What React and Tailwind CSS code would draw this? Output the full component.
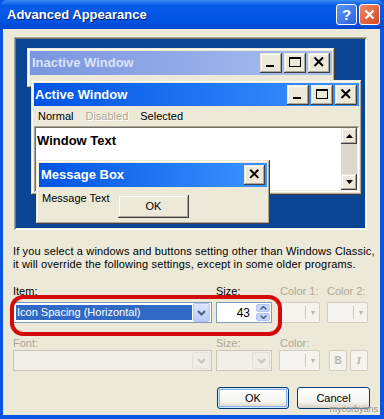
import React from 'react';

// raised classic 3D edge used for the preview windows and their buttons
const raised = 'shadow-[inset_-1px_-1px_#404040,inset_1px_1px_#ece9d8,inset_-2px_-2px_#aca899,inset_2px_2px_#fff]';
const sunken = 'shadow-[inset_1px_1px_#aca899,inset_-1px_-1px_#fff,inset_2px_2px_#716f64,inset_-2px_-2px_#f1efe2]';

const CapButton = ({ type, w = 'w-[22px]', h = 'h-[20px]' }) => (
    <div className={`${w} ${h} bg-[#ece9d8] ${raised} flex items-center justify-center`}>
        <svg width="22" height="20" viewBox="0 0 22 20">
            {type === 'min' && <rect x="6" y="12" width="8" height="2" fill="#000" />}
            {type === 'max' && (
                <g fill="none" stroke="#000">
                    <rect x="5.5" y="4.5" width="11" height="9" />
                    <line x1="5" y1="5.5" x2="17" y2="5.5" />
                </g>
            )}
            {type === 'close' && (
                <path d="M6.5 4.5 L15 13 M15 4.5 L6.5 13" stroke="#000" strokeWidth="2" />
            )}
        </svg>
    </div>
);

const ScrollArrow = ({ up }) => (
    <div className={`h-[16px] w-[16px] bg-[#ece9d8] ${raised} flex items-center justify-center`}>
        <svg width="7" height="4" viewBox="0 0 7 4">
            <path d={up ? 'M0 4 L3.5 0 L7 4 Z' : 'M0 0 L3.5 4 L7 0 Z'} fill="#000" />
        </svg>
    </div>
);

const Chevron = ({ color }) => (
    <svg width="9" height="6" viewBox="0 0 9 6">
        <path d="M1 1 L4.5 4.5 L8 1" fill="none" stroke={color} strokeWidth="2" />
    </svg>
);

const DisabledBox = ({ className, children }) => (
    <div className={`${className} h-[21px] border border-[#d2cfc0] bg-[#f4f3ee] rounded-[2px] flex items-center`}>
        {children}
    </div>
);

const ColorButton = () => (
    <DisabledBox className="w-[41px] justify-end">
        <div className="h-[13px] w-px bg-[#c9c7ba] mr-[5px]" />
        <span className="text-[8px] text-[#b8b5a6] mr-[4px] leading-none">▾</span>
    </DisabledBox>
);

const DisabledCombo = ({ width }) => (
    <div className={`${width} h-[21px] border border-[#c9c7ba] bg-[#f0efe8] flex justify-end p-px`}>
        <div className="w-[18px] h-full rounded-[2px] bg-[#eeede6] border border-[#e3e1d6] flex items-center justify-center">
            <Chevron color="#c9c7ba" />
        </div>
    </div>
);

const XpButton = ({ label, isDefault }) => (
    <button
        className={`h-[22px] rounded-[3px] border border-[#003c74] bg-[linear-gradient(to_bottom,#fff,#f4f3ee_70%,#d6d0c5)] text-[11px] text-black ${isDefault ? 'w-[72px] shadow-[inset_0_0_0_1px_#cee7ff,inset_0_0_0_2px_#8cb0f0]' : 'w-[73px]'}`}
    >
        {label}
    </button>
);

const App = () => {
    return (
        <div className="w-[384px] h-[419px] bg-[#0a54e4] flex flex-col font-['Liberation_Sans',Arial,sans-serif] select-none">
            {/* Title bar */}
            <div className="h-[29px] shrink-0 flex items-center pl-[7px] pr-[4px] bg-[linear-gradient(to_bottom,#3d8cf5,#0a5ae8_18%,#0055e5_70%,#0046d2)] rounded-t-[7px]">
                <span className="flex-1 text-white font-bold text-[13px] [text-shadow:1px_1px_#0a1e6e]">Advanced Appearance</span>
                <div className="flex gap-[2px]">
                    <div className="w-[21px] h-[21px] rounded-[3px] border border-white bg-[linear-gradient(135deg,#5c95f5,#2a63e0)] flex items-center justify-center text-white font-bold text-[15px] leading-none">?</div>
                    <div className="w-[21px] h-[21px] rounded-[3px] border border-white bg-[linear-gradient(135deg,#f08a66,#d4461f)] flex items-center justify-center">
                        <svg width="11" height="11" viewBox="0 0 11 11">
                            <path d="M1.5 1.5 L9.5 9.5 M9.5 1.5 L1.5 9.5" stroke="#fff" strokeWidth="2.2" />
                        </svg>
                    </div>
                </div>
            </div>

            {/* Body */}
            <div className="relative flex-1 ml-[3px] mr-[4px] mb-[4px] bg-[#ece9d8] pl-[10px] pt-[8px] text-[11px] text-black">
                {/* Preview */}
                <div className={`ml-px w-[353px] h-[193px] p-[2px] ${sunken} bg-[#ece9d8]`}>
                    <div className="relative w-full h-full bg-[#0a4593] overflow-hidden">
                        {/* Inactive window */}
                        <div className={`absolute left-[11px] top-[9px] w-[308px] h-[40px] p-[3px] bg-[#ece9d8] ${raised}`}>
                            <div className="h-[24px] flex items-center pl-[2px] pr-[2px] bg-[linear-gradient(to_right,#7a96df,#a9c0ee)]">
                                <span className="flex-1 font-bold text-[13px] text-[#d8e4f8]">Inactive Window</span>
                                <div className="flex gap-[2px]">
                                    <CapButton type="min" />
                                    <CapButton type="max" />
                                    <CapButton type="close" />
                                </div>
                            </div>
                        </div>

                        {/* Active window */}
                        <div className={`absolute left-[15px] top-[41px] w-[331px] h-[115px] p-[3px] bg-[#ece9d8] flex flex-col ${raised}`}>
                            <div className="h-[23px] shrink-0 flex items-center pl-[1px] pr-[2px] bg-[linear-gradient(to_right,#0054e3,#3d95ff)]">
                                <span className="flex-1 font-bold text-[13px] text-white">Active Window</span>
                                <div className="flex gap-[2px]">
                                    <CapButton type="min" />
                                    <CapButton type="max" />
                                    <CapButton type="close" />
                                </div>
                            </div>
                            <div className="h-[20px] shrink-0 flex items-center pl-[4px] gap-[12px]">
                                <span>Normal</span>
                                <span className="text-[#aca899] [text-shadow:1px_1px_#fff]">Disabled</span>
                                <span>Selected</span>
                            </div>
                            <div className={`flex-1 flex p-[2px] bg-white ${sunken}`}>
                                <div className="flex-1 pl-[1px] pt-[3px] font-bold text-[13px]">Window Text</div>
                                <div className="w-[16px] flex flex-col bg-[#f1efe2]">
                                    <ScrollArrow up />
                                    <div className="flex-1 bg-[#dcd9cc]" />
                                    <ScrollArrow />
                                </div>
                            </div>
                        </div>

                        {/* Message box */}
                        <div className={`absolute left-[20px] top-[121px] w-[234px] h-[64px] p-[3px] bg-[#ece9d8] flex flex-col ${raised}`}>
                            <div className="h-[24px] shrink-0 flex items-center pl-[2px] pr-[2px] bg-[linear-gradient(to_right,#0054e3,#3d95ff)]">
                                <span className="flex-1 font-bold text-[13px] text-white">Message Box</span>
                                <CapButton type="close" w="w-[21px]" />
                            </div>
                            <div className="flex-1 flex items-start pl-[3px]">
                                <span className="mt-[3px] w-[76px]">Message Text</span>
                                <div className={`mt-[8px] w-[71px] h-[23px] flex items-center justify-center bg-[#ece9d8] ${raised}`}>OK</div>
                            </div>
                        </div>
                    </div>
                </div>

                {/* Description */}
                <p className="mt-[15px] leading-[13px] tracking-[0.15px]">
                    If you select a windows and buttons setting other than Windows Classic,<br />
                    it will override the following settings, except in some older programs.
                </p>

                {/* Item row */}
                <div className="mt-[14px] flex">
                    <div className="w-[199px] flex flex-col">
                        <span className="leading-[13px]">Item:</span>
                        <div className="mt-[4px] h-[21px] border border-[#7f9db9] bg-white flex items-center p-[2px] gap-px">
                            <div className="flex-1 h-full bg-[#316ac5] text-white flex items-center pl-[1px]">Icon Spacing (Horizontal)</div>
                            <div className="w-[17px] h-[19px] -mr-px rounded-[2px] bg-[linear-gradient(to_bottom,#dde7fd,#b6cbf9)] border border-[#b1c8f7] flex items-center justify-center">
                                <Chevron color="#4d6185" />
                            </div>
                        </div>
                    </div>
                    <div className="ml-[4px] w-[56px] flex flex-col">
                        <span className="leading-[13px]">Size:</span>
                        <div className="mt-[4px] h-[21px] border border-[#7f9db9] bg-white flex items-center pl-[2px]">
                            <span className="flex-1 text-right pr-[5px] text-[12px]">43</span>
                            <div className="w-[16px] h-full flex flex-col p-px gap-px">
                                <div className="flex-1 rounded-[2px] bg-[#c6d5f9] border border-[#b2c6f5] flex items-center justify-center">
                                    <svg width="7" height="4" viewBox="0 0 7 4"><path d="M0.5 3.5 L3.5 0.5 L6.5 3.5" fill="none" stroke="#4d6185" strokeWidth="1.5" /></svg>
                                </div>
                                <div className="flex-1 rounded-[2px] bg-[#c6d5f9] border border-[#b2c6f5] flex items-center justify-center">
                                    <svg width="7" height="4" viewBox="0 0 7 4"><path d="M0.5 0.5 L3.5 3.5 L6.5 0.5" fill="none" stroke="#4d6185" strokeWidth="1.5" /></svg>
                                </div>
                            </div>
                        </div>
                    </div>
                    <div className="ml-[7px] w-[41px] flex flex-col">
                        <span className="leading-[13px] pl-px text-[#aca899]">Color 1:</span>
                        <div className="mt-[4px]"><ColorButton /></div>
                    </div>
                    <div className="ml-[7px] w-[41px] flex flex-col">
                        <span className="leading-[13px] text-[#aca899]">Color 2:</span>
                        <div className="mt-[4px]"><ColorButton /></div>
                    </div>
                </div>

                {/* Font row */}
                <div className="mt-[14px] flex items-end">
                    <div className="w-[199px] flex flex-col">
                        <span className="leading-[13px] text-[#aca899]">Font:</span>
                        <DisabledCombo width="w-[199px]" />
                    </div>
                    <div className="ml-[4px] w-[56px] flex flex-col">
                        <span className="leading-[13px] text-[#aca899]">Size:</span>
                        <DisabledCombo width="w-[56px]" />
                    </div>
                    <div className="ml-[7px] w-[41px] flex flex-col">
                        <span className="leading-[13px] pl-px text-[#aca899]">Color:</span>
                        <ColorButton />
                    </div>
                    <DisabledBox className="ml-[9px] w-[18px] justify-center">
                        <span className="font-bold text-[10px] text-[#b8b5a6]">B</span>
                    </DisabledBox>
                    <DisabledBox className="ml-[3px] w-[18px] justify-center">
                        <span className="italic font-bold text-[11px] text-[#b8b5a6] font-['Liberation_Serif',serif]">I</span>
                    </DisabledBox>
                </div>

                {/* Dialog buttons */}
                <div className="mt-[16px] ml-[204px] flex gap-[8px]">
                    <XpButton label="OK" isDefault />
                    <XpButton label="Cancel" />
                </div>

                {/* Red annotation ring */}
                <div className="absolute left-[7px] top-[266px] w-[272px] h-[41px] border-[4px] border-[#d40b0b] rounded-[13px] pointer-events-none" />

                {/* Watermark */}
                <span className="absolute right-[2px] bottom-[1px] text-[9px] text-[#8c8a80] [text-shadow:0_0_2px_#fff] leading-none">mycorbyans</span>
            </div>
        </div>
    );
};

export default App;
